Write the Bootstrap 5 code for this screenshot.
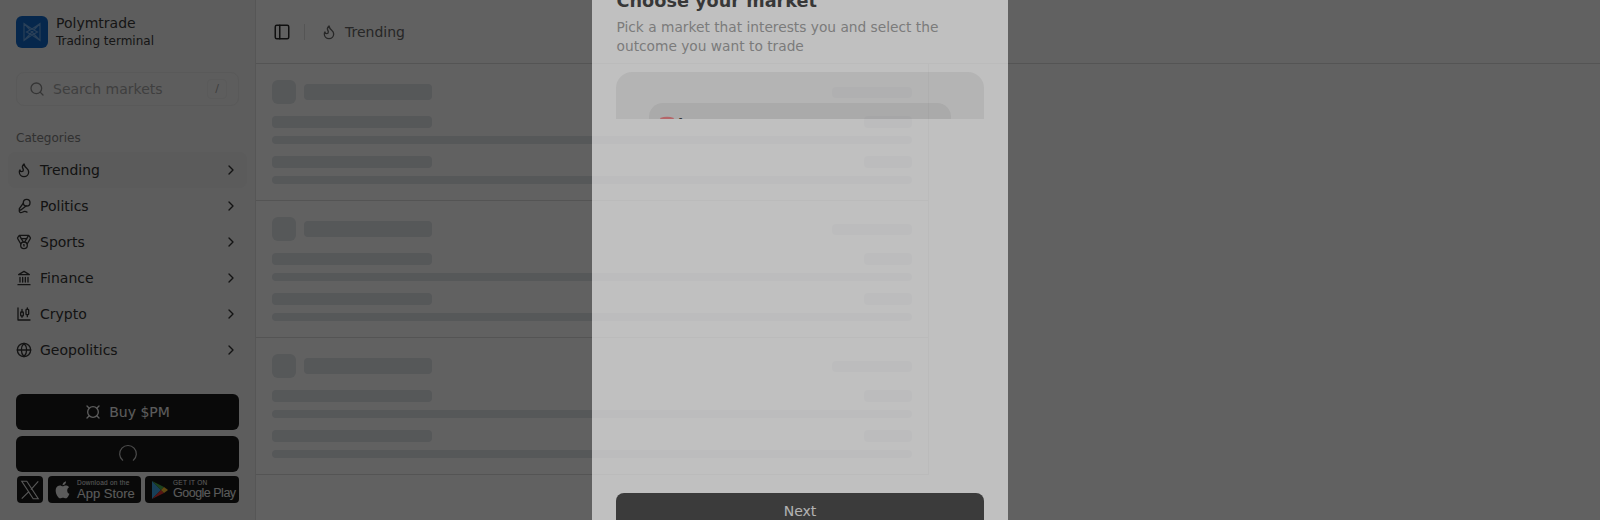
<!doctype html>
<html lang="en"><head><meta charset="utf-8"><title>Polymtrade</title>
<link href="https://cdn.jsdelivr.net/npm/bootstrap@5.3.0/dist/css/bootstrap.min.css" rel="stylesheet">
<style>
html,body{height:100%;overflow:hidden}
body{font-family:"DejaVu Sans",sans-serif;background:#fff;color:#3a3a3a;font-size:14px}
svg.ico{fill:none;stroke:currentColor;stroke-width:2;stroke-linecap:round;stroke-linejoin:round;flex:none}
.app-shell{height:520px;width:1600px}
.side-pane{width:256px;flex:none;background:#f3f3f3;border-right:1px solid #e2e2e2;padding:16px 16px 17px}
.brand-row{height:32px}
.brand-logo{width:32px;height:32px;border-radius:6px;background:#1168c8;flex:none}
.brand-name{font-size:14px;line-height:18px}
.brand-sub{font-size:12px;line-height:18px}
.search-box{height:34px;margin-top:24px;border:1px solid #e9e9e9;border-radius:8px;padding:0 11px 0 12px;color:#a6a6a6;background:#f4f4f4}
.search-box svg{color:#8c8c8c}
.search-key{width:20px;height:20px;border:1px solid #ececec;border-radius:4px;font-size:11px;line-height:18px;text-align:center;color:#a0a0a0;margin-left:auto}
.cat-title{font-size:12px;line-height:16px;color:#808080;margin-top:24px;margin-bottom:6px}
.cat-link{height:36px;margin:0 -8px;padding:0 8px;border-radius:8px;gap:8px;color:#333;text-decoration:none}
.cat-link.is-on{background:#eeeeee}
.cat-link .chev{margin-left:auto}
.dark-stack{gap:6px}
.dark-btn{height:36px;width:223px;background:#1a1a1a;border-radius:6px;color:#f2f2f2;border:0;font-size:14px;gap:8px;padding:0}
.store-row{height:27px;margin-top:4px;width:223px}
.store-tile{background:#1a1a1a;border-radius:4px;color:#f0f0f0;height:27px;white-space:nowrap}
.tile-x{width:26px;margin:0 5px 0 1px}
.tile-apple{width:93px;gap:4px;padding-left:5px;margin-right:4px}
.tile-play{width:94px;gap:4px;padding-left:6px}
.tile-tiny{font-family:"Liberation Sans",sans-serif;font-size:6.5px;line-height:8px;letter-spacing:.25px}
.tile-big{font-family:"Liberation Sans",sans-serif;font-size:13px;line-height:13px}
.tile-big-tight{font-size:12.5px;letter-spacing:-.5px}
.main-pane{flex:1;background:#fff;min-width:0}
.top-strip{height:64px;border-bottom:1px solid #dedede;padding:1px 16px 0 17px;gap:12px}
.strip-sep{width:1px;height:16px;background:#e0e0e0;margin:0 4px 0 1px}
.strip-label{color:#666}
.feed-col{width:673px;border-right:1px solid #dedede}
.feed-row{height:137px;border-bottom:1px solid #dedede;padding:16px;gap:12px}
.sk{background:#e2e6e9;border-radius:4px}
.sk-a{width:24px;height:24px;border-radius:6px}
.sk-b{width:128px;height:16px;margin-top:4px}
.sk-c{width:160px;height:12px}
.sk-d{height:8px}
.sk-e{width:80px;height:11px;margin-top:7px;margin-left:auto}
.sk-f{width:48px;height:12px}
.dim-layer{position:fixed;inset:0;background:rgba(0,0,0,.62)}
.sheet{position:fixed;left:592px;top:-37px;width:416px;height:590px;background:#fff;opacity:.6;padding:24px}
.sheet h2{font-size:17.7px;line-height:28px;font-weight:700;margin:0 0 0 .5px;color:#1c1c1c}
.sheet p{font-size:13.75px;line-height:19.6px;color:#8c8c8c;margin:2.5px 0 0 .5px}
.market-clip{height:47px;margin-top:15px;background:#ececec;border-radius:16px 16px 0 0;overflow:hidden;padding:31px 33px 0}
.market-card{height:60px;background:#dadada;border-radius:14px 14px 0 0;padding:10px 11px;gap:4px;color:#1c1c1c;font-weight:700;line-height:20px}
.t-mark{flex:none;margin-top:1px}
.next-btn{margin-top:auto;height:36px;background:#222;color:#e8e8e8;border:0;border-radius:8px;font-size:14px;width:100%}
.next-btn:hover{background:#222;color:#e8e8e8}
</style></head>
<body>
<div class="app-shell d-flex">
<aside class="side-pane d-flex flex-column">
  <div class="brand-row d-flex align-items-center gap-2">
    <div class="brand-logo d-flex align-items-center justify-content-center">
      <svg width="20" height="20" viewBox="0 0 20 20" fill="none" stroke="#6fa8e6" stroke-width="1.1"><path d="M2 1.500V18.500L10 13 18 18.500V1.500L10 7zM2 1.500 18 18.500M18 1.500 2 18.500M4.500 10 10 7 15.500 10 10 13z"/></svg>
    </div>
    <div><div class="brand-name">Polymtrade</div><div class="brand-sub">Trading terminal</div></div>
  </div>
  <div class="search-box d-flex align-items-center gap-2">
    <svg class="ico" width="16" height="16" viewBox="0 0 24 24"><circle cx="11" cy="11" r="8"/><path d="m21 21-4.3-4.3"/></svg>
    <span>Search markets</span><span class="search-key">/</span>
  </div>
  <div class="cat-title">Categories</div>
  <nav class="d-flex flex-column">
    <a class="cat-link is-on d-flex align-items-center"><svg class="ico" width="16" height="16" viewBox="0 0 24 24"><path d="M8.5 14.5A2.5 2.5 0 0 0 11 12c0-1.38-.5-2-1-3-1.072-2.143-.224-4.054 2-6 .5 2.5 2 4.9 4 6.5 2 1.6 3 3.5 3 5.5a7 7 0 1 1-14 0c0-1.153.433-2.294 1-3a2.5 2.5 0 0 0 2.5 2.5z"/></svg>Trending<svg class="ico chev" width="16" height="16" viewBox="0 0 24 24"><path d="m9 18 6-6-6-6"/></svg></a>
    <a class="cat-link d-flex align-items-center"><svg class="ico" width="16" height="16" viewBox="0 0 24 24"><path d="m11 7.601-5.994 8.19a1 1 0 0 0 .1 1.298l.817.818a1 1 0 0 0 1.314.087L15.09 12"/><path d="M16.5 21.174C15.5 20.5 14.372 20 13 20c-2.058 0-3.928 2.356-6 2-2.072-.356-2.775-3.369-1.5-4.5"/><circle cx="16" cy="7" r="5"/></svg>Politics<svg class="ico chev" width="16" height="16" viewBox="0 0 24 24"><path d="m9 18 6-6-6-6"/></svg></a>
    <a class="cat-link d-flex align-items-center"><svg class="ico" width="16" height="16" viewBox="0 0 24 24"><path d="M7.21 15 2.66 7.14a2 2 0 0 1 .13-2.2L4.4 2.8A2 2 0 0 1 6 2h12a2 2 0 0 1 1.6.8l1.6 2.14a2 2 0 0 1 .14 2.2L16.79 15"/><path d="M11 12 5.12 2.2"/><path d="m13 12 5.88-9.8"/><path d="M8 7h8"/><circle cx="12" cy="17" r="5"/><path d="M12 18v-2h-.5"/></svg>Sports<svg class="ico chev" width="16" height="16" viewBox="0 0 24 24"><path d="m9 18 6-6-6-6"/></svg></a>
    <a class="cat-link d-flex align-items-center"><svg class="ico" width="16" height="16" viewBox="0 0 24 24"><path d="M3 22h18M6 18v-7M10 18v-7M14 18v-7M18 18v-7M12 2l8 5H4z"/></svg>Finance<svg class="ico chev" width="16" height="16" viewBox="0 0 24 24"><path d="m9 18 6-6-6-6"/></svg></a>
    <a class="cat-link d-flex align-items-center"><svg class="ico" width="16" height="16" viewBox="0 0 24 24"><path d="M3 3v18h18"/><path d="M9 5v4M9 15v2M17 3v2M17 13v3"/><rect x="7" y="9" width="4" height="6" rx="1"/><rect x="15" y="5" width="4" height="8" rx="1"/></svg>Crypto<svg class="ico chev" width="16" height="16" viewBox="0 0 24 24"><path d="m9 18 6-6-6-6"/></svg></a>
    <a class="cat-link d-flex align-items-center"><svg class="ico" width="16" height="16" viewBox="0 0 24 24"><circle cx="12" cy="12" r="10"/><path d="M12 2a14.5 14.5 0 0 0 0 20 14.5 14.5 0 0 0 0-20M2 12h20"/></svg>Geopolitics<svg class="ico chev" width="16" height="16" viewBox="0 0 24 24"><path d="m9 18 6-6-6-6"/></svg></a>
  </nav>
  <div class="dark-stack mt-auto d-flex flex-column">
    <button class="btn dark-btn d-flex align-items-center justify-content-center"><svg class="ico" width="16" height="16" viewBox="0 0 24 24"><circle cx="12" cy="12" r="8"/><path d="m3 3 3 3M21 3l-3 3M3 21l3-3M21 21l-3-3"/></svg>Buy $PM</button>
    <button class="btn dark-btn d-flex align-items-center justify-content-center"><svg width="20" height="20" viewBox="0 0 24 24" fill="none" stroke="#c8c8c8" stroke-width="1.4" stroke-linecap="round"><path d="M5.600 19.500A10 10 0 1 1 18.400 19.500"/></svg></button>
  </div>
  <div class="store-row d-flex">
    <div class="store-tile tile-x d-flex align-items-center justify-content-center"><svg width="22" height="22" viewBox="0 0 24 24" fill="none" stroke="#e8e8e8" stroke-width="1.2"><path d="M3 2.500h5.500l12.500 19h-5.500zM21 2.500l-8 9M11 13.500 3 21.500"/></svg></div>
    <div class="store-tile tile-apple d-flex align-items-center"><svg width="20" height="20" viewBox="0 0 24 24" fill="#f0f0f0"><path d="M17.050 12.500c0-2.600 2.100-3.800 2.200-3.900-1.200-1.800-3.100-2-3.700-2-1.600-.2-3.100.9-3.900.9s-2-.9-3.300-.9C6.600 6.600 5 7.600 4.100 9.100c-1.800 3.100-.5 7.800 1.300 10.300.9 1.200 1.900 2.600 3.200 2.600 1.300-.1 1.800-.8 3.300-.8s2 .8 3.300.8c1.400 0 2.300-1.300 3.100-2.500 1-1.400 1.400-2.800 1.400-2.900-.1 0-2.700-1-2.700-4.100zM14.500 4.900c.7-.9 1.200-2 1.100-3.200-1 0-2.300.7-3 1.500-.6.8-1.200 1.900-1.100 3.100 1.200.1 2.300-.6 3-1.400z"/></svg><div><div class="tile-tiny">Download on the</div><div class="tile-big">App Store</div></div></div>
    <div class="store-tile tile-play d-flex align-items-center"><svg width="18" height="20" viewBox="0 0 18 20"><path d="M1 1l9 9-9 9z" fill="#3fa7e8"/><path d="M1 1l12 6-3 3z" fill="#4caf50"/><path d="M1 19l12-6-3-3z" fill="#e53935"/><path d="M13 7l4 3-4 3-3-3z" fill="#fbc02d"/></svg><div><div class="tile-tiny">GET IT ON</div><div class="tile-big tile-big-tight">Google Play</div></div></div>
  </div>
</aside>
<main class="main-pane">
  <header class="top-strip d-flex align-items-center">
    <svg class="ico" width="18" height="18" viewBox="0 0 24 24" style="color:#2a2a2a"><rect x="3" y="3" width="18" height="18" rx="2"/><path d="M9 3v18"/></svg>
    <span class="strip-sep"></span>
    <span class="d-flex align-items-center gap-2 strip-label"><svg class="ico" width="16" height="16" viewBox="0 0 24 24"><path d="M8.5 14.500A2.500 2.500 0 0 0 11 12c0-1.380-.5-2-1-3-1.072-2.143-.224-4.054 2-6 .5 2.500 2 4.900 4 6.500 2 1.600 3 3.500 3 5.500a7 7 0 1 1-14 0c0-1.153.433-2.294 1-3a2.500 2.500 0 0 0 2.500 2.500z"/></svg>Trending</span>
  </header>
  <section class="feed-col">
    <div class="feed-row d-flex flex-column"><div class="d-flex align-items-start gap-2"><div class="sk sk-a"></div><div class="sk sk-b"></div><div class="sk sk-e"></div></div><div class="d-flex flex-column gap-2"><div class="d-flex justify-content-between"><div class="sk sk-c"></div><div class="sk sk-f"></div></div><div class="sk sk-d"></div></div><div class="d-flex flex-column gap-2"><div class="d-flex justify-content-between"><div class="sk sk-c"></div><div class="sk sk-f"></div></div><div class="sk sk-d"></div></div></div>
    <div class="feed-row d-flex flex-column"><div class="d-flex align-items-start gap-2"><div class="sk sk-a"></div><div class="sk sk-b"></div><div class="sk sk-e"></div></div><div class="d-flex flex-column gap-2"><div class="d-flex justify-content-between"><div class="sk sk-c"></div><div class="sk sk-f"></div></div><div class="sk sk-d"></div></div><div class="d-flex flex-column gap-2"><div class="d-flex justify-content-between"><div class="sk sk-c"></div><div class="sk sk-f"></div></div><div class="sk sk-d"></div></div></div>
    <div class="feed-row d-flex flex-column"><div class="d-flex align-items-start gap-2"><div class="sk sk-a"></div><div class="sk sk-b"></div><div class="sk sk-e"></div></div><div class="d-flex flex-column gap-2"><div class="d-flex justify-content-between"><div class="sk sk-c"></div><div class="sk sk-f"></div></div><div class="sk sk-d"></div></div><div class="d-flex flex-column gap-2"><div class="d-flex justify-content-between"><div class="sk sk-c"></div><div class="sk sk-f"></div></div><div class="sk sk-d"></div></div></div>
  </section>
</main>
</div>
<div class="dim-layer"></div>
<div class="sheet d-flex flex-column">
  <h2>Choose your market</h2>
  <p>Pick a market that interests you and select the outcome you want to trade</p>
  <div class="market-clip"><div class="market-card d-flex"><svg class="t-mark" width="14" height="16" viewBox="0 0 14 16"><path d="M0 4Q7 1.500 14 4L13 6Q10 5 8 5.200V16H6V5.200Q4 5 1 6Z" fill="#ec6a6e"/></svg><span>I</span></div></div>
  <button class="btn next-btn">Next</button>
</div>
</body></html>
